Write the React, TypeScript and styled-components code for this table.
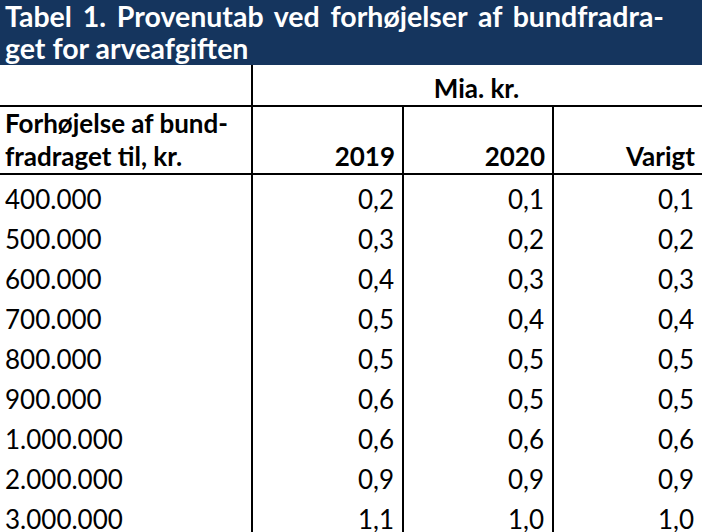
import React from 'react'
import styled, { createGlobalStyle } from 'styled-components'

const GlobalStyle = createGlobalStyle`
  html, body {
    margin: 0;
    padding: 0;
    background: #ffffff;
  }
  body {
    font-family: Lato, "Open Sans", sans-serif;
    color: #000000;
  }
`;

interface Row {
    amount: string;
    y2019: string;
    y2020: string;
    lasting: string;
}

const rows: Row[] = [
    { amount: '400.000', y2019: '0,2', y2020: '0,1', lasting: '0,1' },
    { amount: '500.000', y2019: '0,3', y2020: '0,2', lasting: '0,2' },
    { amount: '600.000', y2019: '0,4', y2020: '0,3', lasting: '0,3' },
    { amount: '700.000', y2019: '0,5', y2020: '0,4', lasting: '0,4' },
    { amount: '800.000', y2019: '0,5', y2020: '0,5', lasting: '0,5' },
    { amount: '900.000', y2019: '0,6', y2020: '0,5', lasting: '0,5' },
    { amount: '1.000.000', y2019: '0,6', y2020: '0,6', lasting: '0,6' },
    { amount: '2.000.000', y2019: '0,9', y2020: '0,9', lasting: '0,9' },
    { amount: '3.000.000', y2019: '1,1', y2020: '1,0', lasting: '1,0' },
];

function App() {
    return (
    <Page>
        <GlobalStyle />
        <Title>
            <TitleLine $justify>Tabel 1. Provenutab ved forhøjelser af bundfradra-</TitleLine>
            <TitleLine>get for arveafgiften</TitleLine>
        </Title>
        <Table>
            <colgroup>
                <col style={{ width: 252 }} />
                <col style={{ width: 151 }} />
                <col style={{ width: 150 }} />
                <col style={{ width: 149 }} />
            </colgroup>
            <thead>
                <UnitRow>
                    <HeadCell $divider />
                    <HeadCell colSpan={3} $align="center">Mia. kr.</HeadCell>
                </UnitRow>
                <LabelRow>
                    <HeadCell $divider>Forhøjelse af bund-<br />fradraget til, kr.</HeadCell>
                    <HeadCell $align="right" $divider>2019</HeadCell>
                    <HeadCell $align="right" $divider>2020</HeadCell>
                    <HeadCell $align="right">Varigt</HeadCell>
                </LabelRow>
            </thead>
            <tbody>
                {rows.map((r) => (
                    <DataRow key={r.amount}>
                        <Cell $divider>{r.amount}</Cell>
                        <Cell $align="right" $divider>{r.y2019}</Cell>
                        <Cell $align="right" $divider>{r.y2020}</Cell>
                        <Cell $align="right">{r.lasting}</Cell>
                    </DataRow>
                ))}
            </tbody>
        </Table>
    </Page>
  )
}

export default App

const Page = styled.div`
  width: 702px;
  height: 532px;
  overflow: hidden;
`;

const Title = styled.h1`
  margin: 0;
  padding: 0 0 1px 5px;
  height: 65px;
  box-sizing: border-box;
  background: #15355e;
  color: #ffffff;
  font-family: Lato, sans-serif;
  font-weight: 700;
  font-size: 28.5px;
  line-height: 32px;
`;

const TitleLine = styled.div<{ $justify?: boolean }>`
  width: 659px;
  white-space: nowrap;
  text-align: ${(p) => (p.$justify ? 'justify' : 'left')};
  text-align-last: ${(p) => (p.$justify ? 'justify' : 'auto')};
`;

const Table = styled.table`
  width: 702px;
  table-layout: fixed;
  border-collapse: collapse;
  font-family: Lato, sans-serif;
  font-size: 26px;
`;

const UnitRow = styled.tr`
  height: 41px;
  border-bottom: 2px solid #000;
`;

const LabelRow = styled.tr`
  height: 66px;
  border-bottom: 2px solid #000;
`;

const DataRow = styled.tr`
  height: 40px;
`;

const HeadCell = styled.th<{ $align?: 'left' | 'center' | 'right'; $divider?: boolean }>`
  padding: 0 7px 0 5px;
  text-align: ${(p) => p.$align ?? 'left'};
  vertical-align: bottom;
  font-weight: 700;
  line-height: 33px;
  white-space: nowrap;
  border-right: ${(p) => (p.$divider ? '2px solid #000' : 'none')};
`;

const Cell = styled.td<{ $align?: 'left' | 'right'; $divider?: boolean }>`
  padding: 0 8px 0 5px;
  text-align: ${(p) => p.$align ?? 'left'};
  vertical-align: bottom;
  line-height: 29px;
  white-space: nowrap;
  border-right: ${(p) => (p.$divider ? '2px solid #000' : 'none')};
`;
